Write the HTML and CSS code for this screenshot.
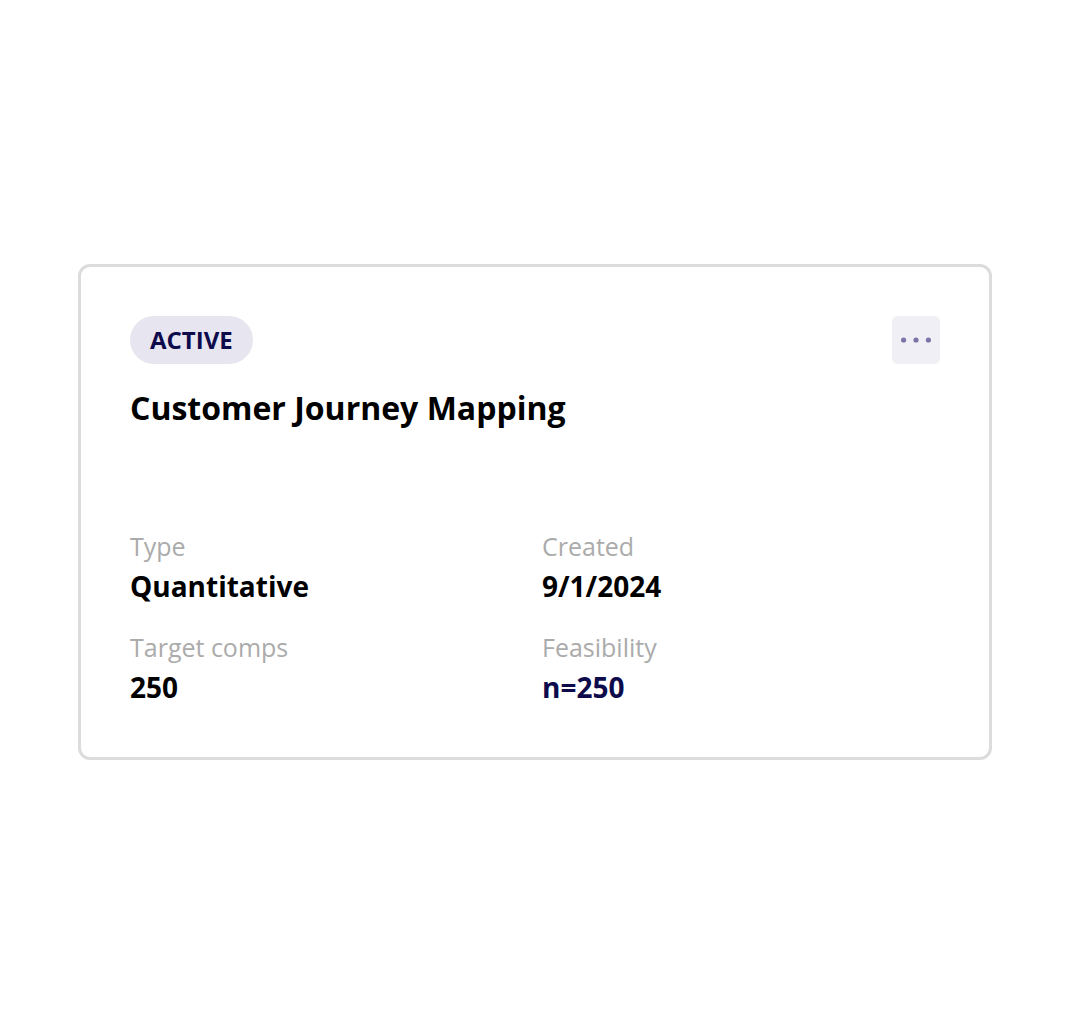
FILE: index.html
```html
<!DOCTYPE html>
<html lang="en">
<head>
    <meta charset="UTF-8">
    <meta name="viewport" content="width=device-width, initial-scale=1.0">
    <title>Study Card</title>
    <link rel="stylesheet" href="styles.css">
</head>
<body>
    <div class="study-card">
        <div class="card-header">
            <span class="status-badge">ACTIVE</span>
            <button class="menu-button" aria-label="More options">
                <svg width="30" height="6" viewBox="0 0 30 6">
                    <circle cx="2.6" cy="3" r="2.6" />
                    <circle cx="15" cy="3" r="2.6" />
                    <circle cx="27.4" cy="3" r="2.6" />
                </svg>
            </button>
        </div>

        <h1 class="card-title">Customer Journey Mapping</h1>

        <div class="card-details">
            <div class="detail">
                <div class="detail-label">Type</div>
                <div class="detail-value">Quantitative</div>
            </div>
            <div class="detail">
                <div class="detail-label">Created</div>
                <div class="detail-value">9/1/2024</div>
            </div>
            <div class="detail">
                <div class="detail-label">Target comps</div>
                <div class="detail-value">250</div>
            </div>
            <div class="detail">
                <div class="detail-label">Feasibility</div>
                <div class="detail-value highlight">n=250</div>
            </div>
        </div>
    </div>
</body>
</html>
```

FILE: styles.css
```css
body {
    font-family: "Open Sans", "Noto Sans", sans-serif;
    margin: 0;
    min-height: 100vh;
    display: flex;
    align-items: center;
    justify-content: center;
    background-color: #fff;
}

.study-card {
    width: 914px;
    box-sizing: border-box;
    border: 3px solid #dcdcdc;
    border-radius: 12px;
    padding: 49px 49px 50px;
    background: white;
}

.card-header {
    display: flex;
    justify-content: space-between;
    align-items: flex-start;
}

.status-badge {
    display: inline-block;
    height: 48px;
    line-height: 48px;
    padding: 0 20px;
    border-radius: 24px;
    background-color: #e7e5ef;
    color: #0e0b4c;
    font-size: 24px;
    font-weight: 700;
}

.menu-button {
    width: 48px;
    height: 48px;
    border: none;
    border-radius: 6px;
    background-color: #f0eff5;
    padding: 0;
    display: flex;
    align-items: center;
    justify-content: center;
    cursor: pointer;
}

.menu-button svg {
    fill: #7a75a6;
}

.card-title {
    margin: 22px 0 0;
    font-size: 32px;
    line-height: 1.4;
    font-weight: 700;
    color: #000;
}

.card-details {
    display: grid;
    grid-template-columns: 1fr 1fr;
    column-gap: 14px;
    row-gap: 24px;
    margin-top: 98px;
}

.detail-label {
    font-size: 25px;
    line-height: 1.4;
    color: #ababab;
}

.detail-value {
    margin-top: 3px;
    font-size: 28px;
    line-height: 1.4;
    font-weight: 700;
    color: #000;
}

.detail-value.highlight {
    color: #0e0b4c;
}
```
